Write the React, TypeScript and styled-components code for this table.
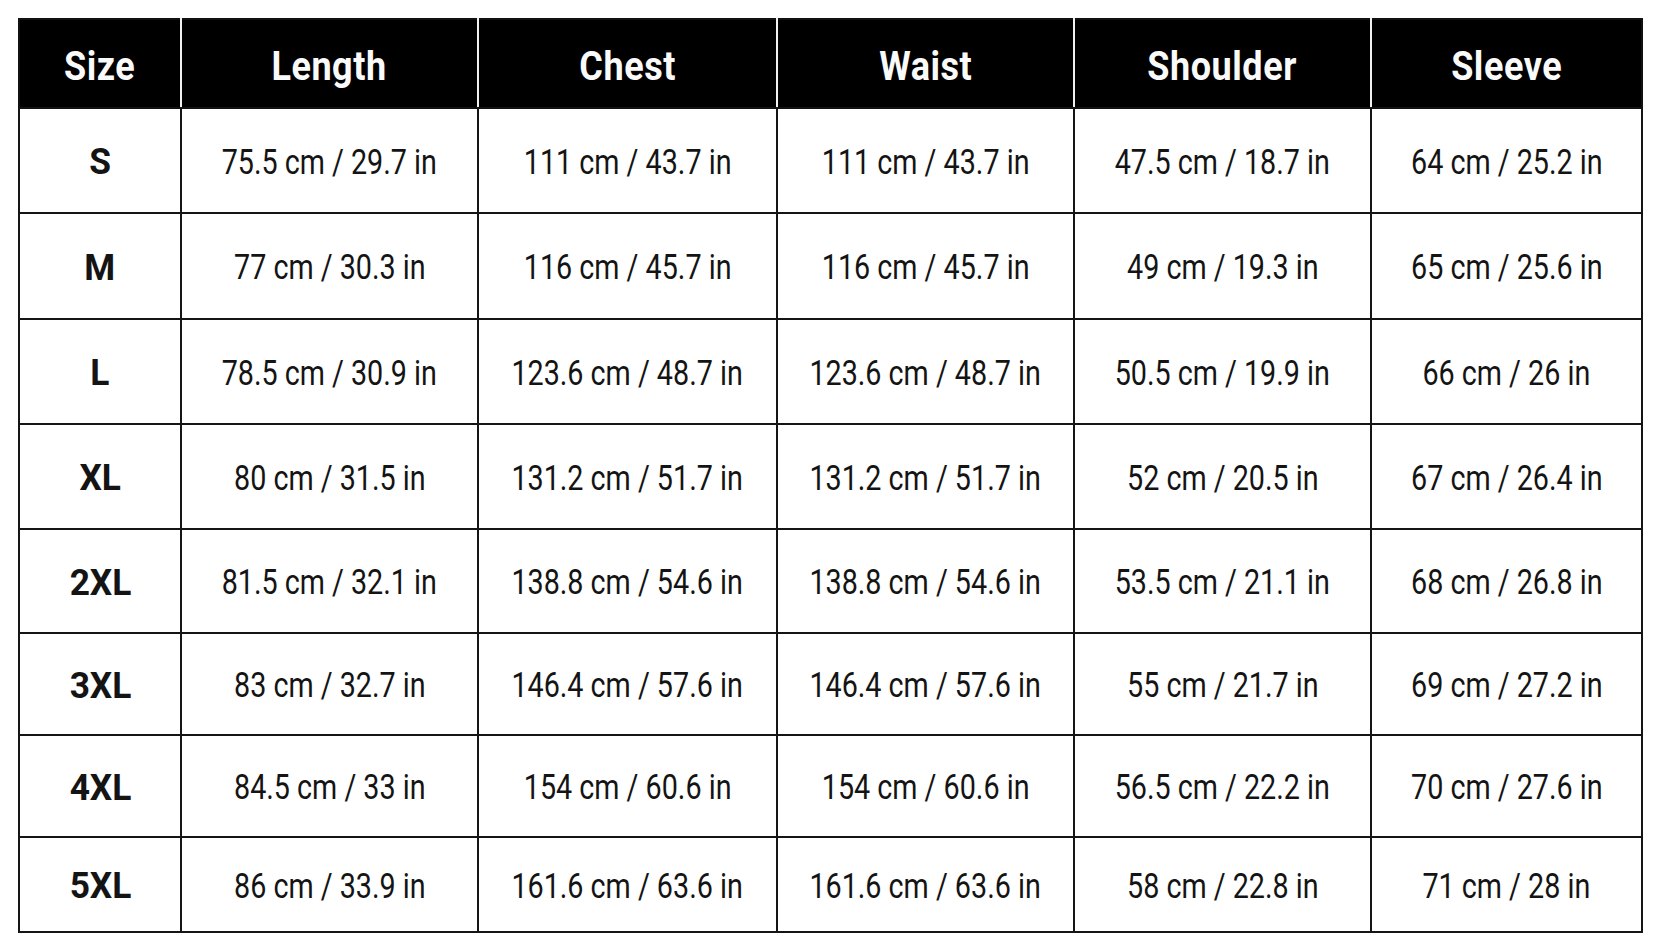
import styled, { createGlobalStyle } from "styled-components";

const GlobalStyle = createGlobalStyle`
  html, body {
    margin: 0;
    padding: 0;
    background: #ffffff;
  }
  body {
    font-family: Roboto, "Liberation Sans", sans-serif;
  }
`;

type SizeRow = {
  size: string;
  length: string;
  chest: string;
  waist: string;
  shoulder: string;
  sleeve: string;
  height: number;
};

const columns = [
  { label: "Size", width: 162 },
  { label: "Length", width: 297 },
  { label: "Chest", width: 299 },
  { label: "Waist", width: 297 },
  { label: "Shoulder", width: 297 },
  { label: "Sleeve", width: 271 },
];

const rows: SizeRow[] = [
  { size: "S", length: "75.5 cm / 29.7 in", chest: "111 cm / 43.7 in", waist: "111 cm / 43.7 in", shoulder: "47.5 cm / 18.7 in", sleeve: "64 cm / 25.2 in", height: 105 },
  { size: "M", length: "77 cm / 30.3 in", chest: "116 cm / 45.7 in", waist: "116 cm / 45.7 in", shoulder: "49 cm / 19.3 in", sleeve: "65 cm / 25.6 in", height: 106 },
  { size: "L", length: "78.5 cm / 30.9 in", chest: "123.6 cm / 48.7 in", waist: "123.6 cm / 48.7 in", shoulder: "50.5 cm / 19.9 in", sleeve: "66 cm / 26 in", height: 105 },
  { size: "XL", length: "80 cm / 31.5 in", chest: "131.2 cm / 51.7 in", waist: "131.2 cm / 51.7 in", shoulder: "52 cm / 20.5 in", sleeve: "67 cm / 26.4 in", height: 105 },
  { size: "2XL", length: "81.5 cm / 32.1 in", chest: "138.8 cm / 54.6 in", waist: "138.8 cm / 54.6 in", shoulder: "53.5 cm / 21.1 in", sleeve: "68 cm / 26.8 in", height: 104 },
  { size: "3XL", length: "83 cm / 32.7 in", chest: "146.4 cm / 57.6 in", waist: "146.4 cm / 57.6 in", shoulder: "55 cm / 21.7 in", sleeve: "69 cm / 27.2 in", height: 102 },
  { size: "4XL", length: "84.5 cm / 33 in", chest: "154 cm / 60.6 in", waist: "154 cm / 60.6 in", shoulder: "56.5 cm / 22.2 in", sleeve: "70 cm / 27.6 in", height: 102 },
  { size: "5XL", length: "86 cm / 33.9 in", chest: "161.6 cm / 63.6 in", waist: "161.6 cm / 63.6 in", shoulder: "58 cm / 22.8 in", sleeve: "71 cm / 28 in", height: 95 },
];

const Page = styled.main`
  padding: 18px 0 0 18px;
`;

const Table = styled.table`
  border-collapse: collapse;
  table-layout: fixed;
  width: 1623px;
  border: 2px solid #111;
`;

const HeadRow = styled.tr`
  height: 89px;
  background: #000;
`;

const HeadCell = styled.th`
  color: #fafafa;
  font-size: 40px;
  font-weight: 700;
  letter-spacing: 0.6px;
  text-align: center;
  padding: 6px 0 0;
  border-left: 2px solid #f2f2f2;
  border-bottom: 2px solid #111;

  &:first-child {
    border-left: 2px solid #111;
  }
`;

const BodyRow = styled.tr<{ $height: number }>`
  height: ${({ $height }) => $height}px;
`;

const Cell = styled.td<{ $bold?: boolean }>`
  border: 2px solid #151515;
  color: #141414;
  font-size: ${({ $bold }) => ($bold ? "36px" : "35px")};
  font-weight: ${({ $bold }) => ($bold ? 700 : 400)};
  text-align: center;
  padding: 3px 0 0;
  white-space: nowrap;
`;

// Roboto narrowed to stand in for the condensed face of the chart
const Narrow = styled.span<{ $scale: number }>`
  display: inline-block;
  transform: scaleX(${({ $scale }) => $scale});
  transform-origin: center;
`;

const App = () => {
  return (
    <Page>
      <GlobalStyle />
      <Table>
        <colgroup>
          {columns.map((col) => (
            <col key={col.label} style={{ width: col.width }} />
          ))}
        </colgroup>
        <thead>
          <HeadRow>
            {columns.map((col) => (
              <HeadCell key={col.label}>
                <Narrow $scale={0.9}>{col.label}</Narrow>
              </HeadCell>
            ))}
          </HeadRow>
        </thead>
        <tbody>
          {rows.map((row) => (
            <BodyRow key={row.size} $height={row.height}>
              <Cell $bold>
                <Narrow $scale={0.98}>{row.size}</Narrow>
              </Cell>
              {[row.length, row.chest, row.waist, row.shoulder, row.sleeve].map(
                (value, idx) => (
                  <Cell key={idx}>
                    <Narrow $scale={0.82}>{value}</Narrow>
                  </Cell>
                )
              )}
            </BodyRow>
          ))}
        </tbody>
      </Table>
    </Page>
  );
};

export default App;
